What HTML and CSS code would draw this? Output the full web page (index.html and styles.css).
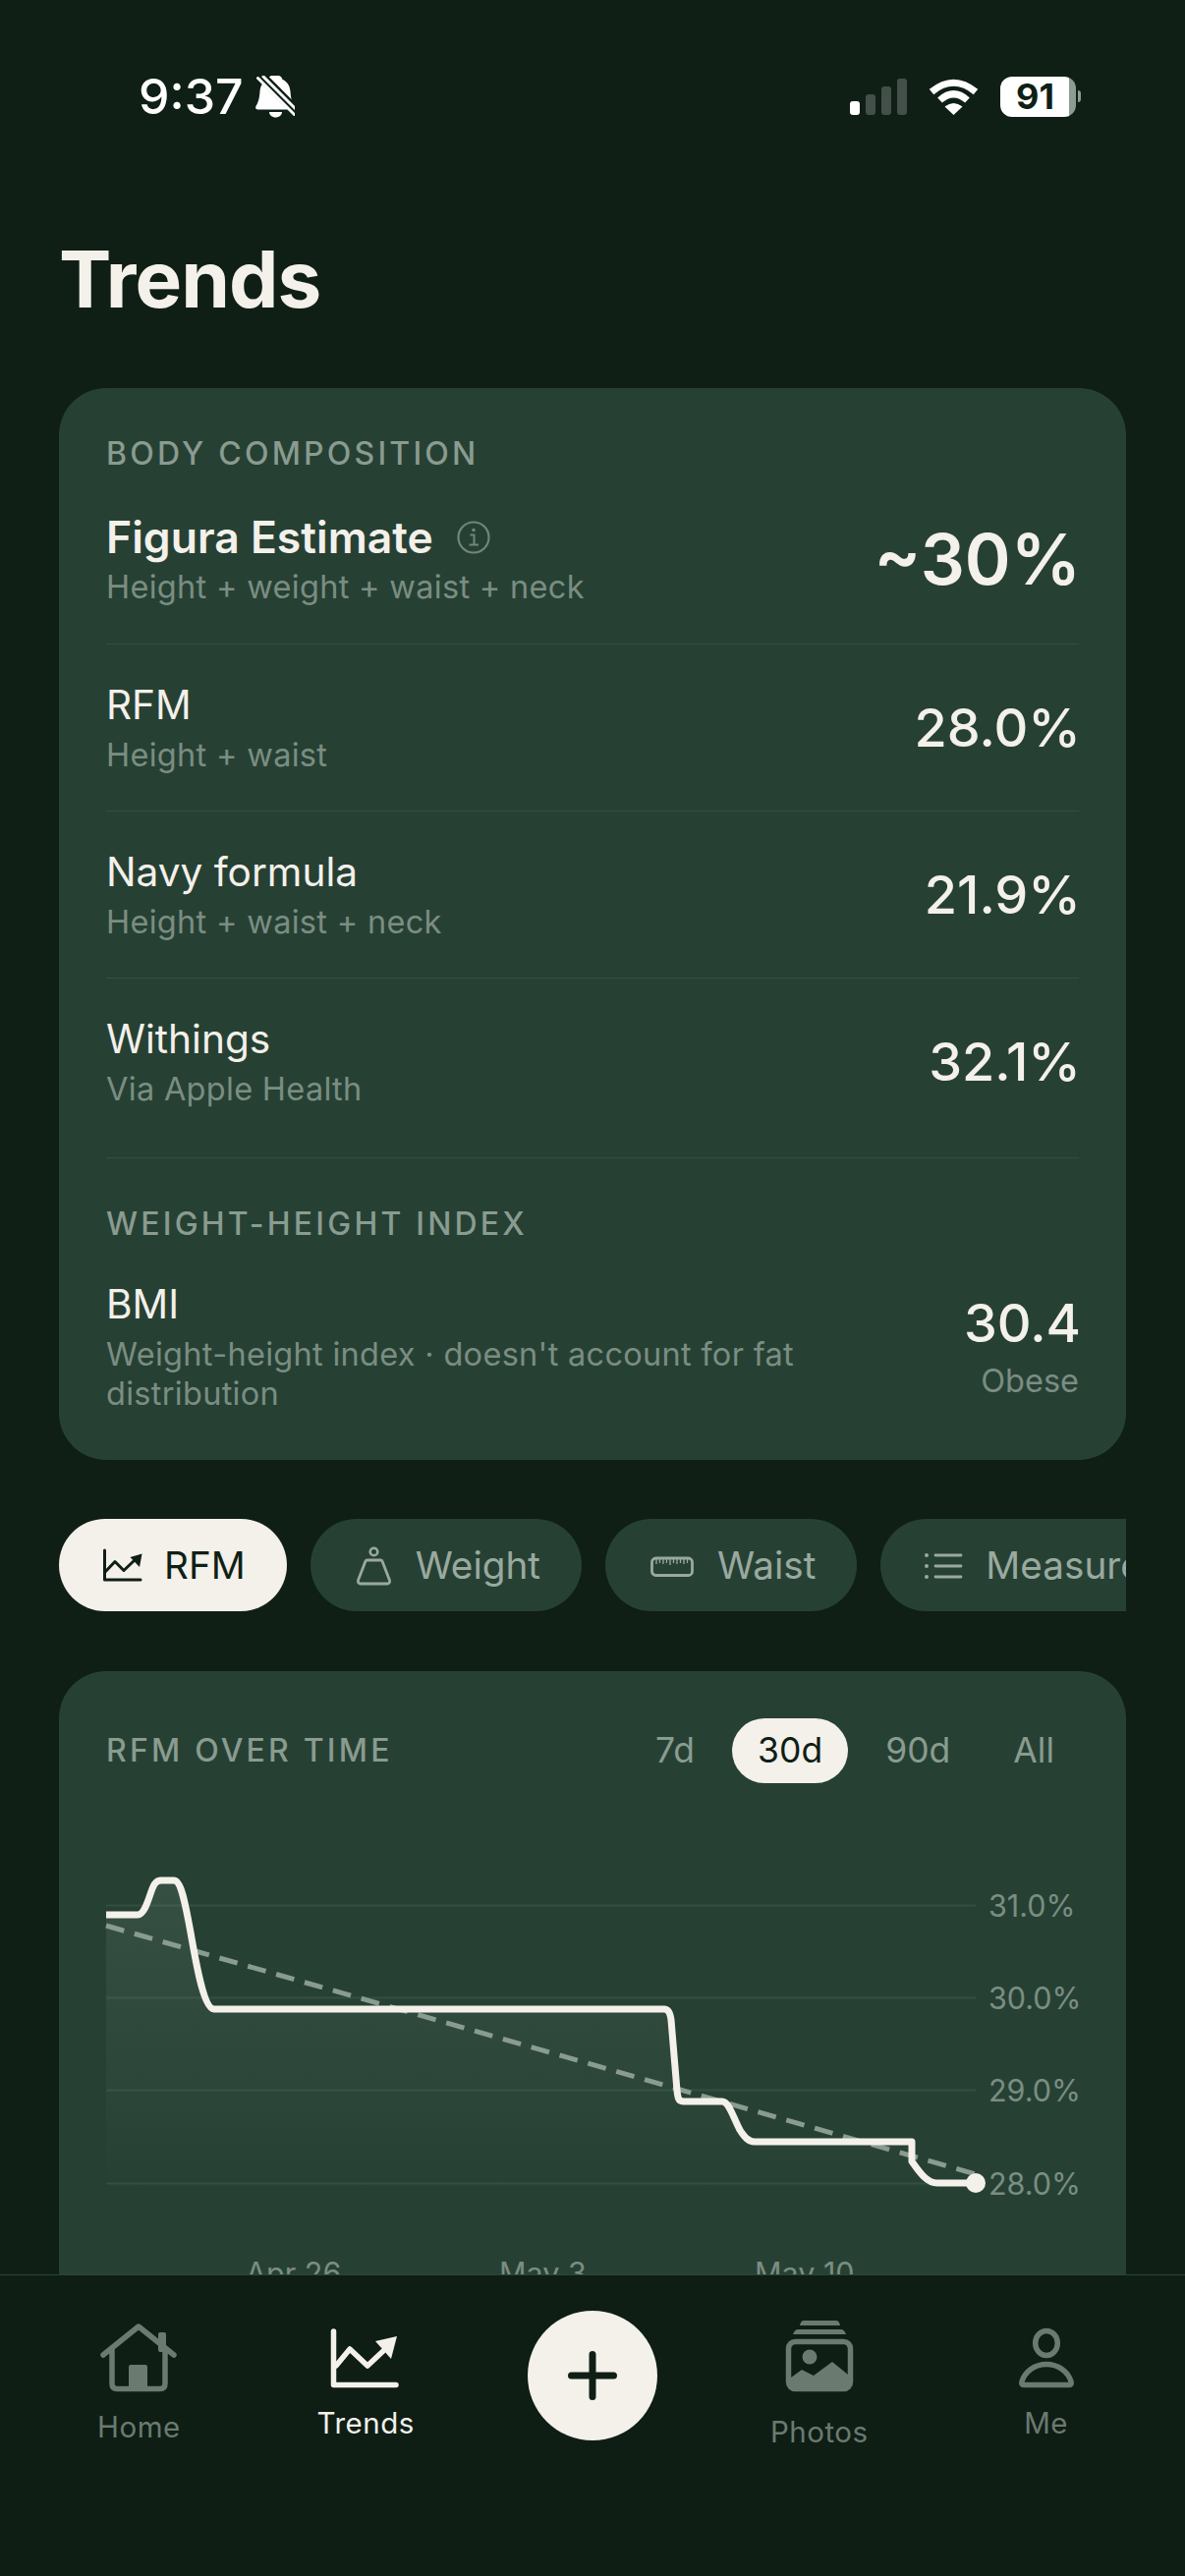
FILE: index.html
```html
<!DOCTYPE html>
<html lang="en">
<head>
<meta charset="utf-8">
<title>Trends</title>
<link rel="stylesheet" href="styles.css">
</head>
<body>
<div class="screen">
  <header class="status">
    <div class="status-left">
      <span class="time">9:37</span>
      <svg class="bell" viewBox="0 0 40 43" width="40" height="43">
        <path fill="#fff" d="M23 0c2.500 0 4 2 4.500 4 5 2 7.500 6.500 8 12 .5 7 1.500 11 4 15 1 2 0 3.500-2 3.500H2.500c-2 0-3-1.500-2-3.500 2.500-4 3.500-8 4-15 .5-5.500 3-10 8-12 .5-2 2-4 4.500-4z"/>
        <path fill="#fff" d="M14 37h13c0 3-3 5.500-6.500 5.500S14 40 14 37z"/>
        <path stroke="#0f1f16" stroke-width="10" d="M5.500 0l36 36"/>
        <path stroke="#fff" stroke-width="3" stroke-linecap="round" d="M2.500 2.500l37 37M8 1l33 33"/>
      </svg>
    </div>
    <div class="status-right">
      <div class="signal">
        <span class="bar bar-1"></span><span class="bar bar-2"></span><span class="bar bar-3"></span><span class="bar bar-4"></span>
      </div>
      <svg class="wifi" viewBox="0 0 51 37" width="51" height="37">
        <path fill="none" stroke="#fff" stroke-width="7" d="M3 13.500Q25.500-5 48 13.500"/>
        <path fill="none" stroke="#fff" stroke-width="7" d="M11.500 22Q25.500 9.500 39.500 22"/>
        <path fill="#fff" d="M25.500 37L16.500 28.500Q25.500 21.500 34.500 28.500Z"/>
      </svg>
      <div class="battery"><div class="battery-body"><span class="battery-num">91</span></div><span class="battery-tip"></span></div>
    </div>
  </header>

  <main class="content">
    <h1 class="title">Trends</h1>

    <section class="card comp-card">
      <div class="label">BODY COMPOSITION</div>
      <div class="row row-first">
        <div class="row-left">
          <div class="name name-strong">Figura Estimate
            <svg class="info" viewBox="0 0 34 34" width="34" height="34">
              <circle cx="17" cy="17" r="15.500" fill="none" stroke="#72857a" stroke-width="2.200"/>
              <circle cx="17" cy="9.500" r="1.800" fill="#72857a"/>
              <path fill="none" stroke="#72857a" stroke-width="2" d="M13.500 14.500H17.500V24M12.500 24.500H22"/>
            </svg>
          </div>
          <div class="sub sub-first">Height + weight + waist + neck</div>
        </div>
        <div class="value value-big">~30%</div>
      </div>
      <div class="row">
        <div class="row-left"><div class="name">RFM</div><div class="sub">Height + waist</div></div>
        <div class="value">28.0%</div>
      </div>
      <div class="row">
        <div class="row-left"><div class="name">Navy formula</div><div class="sub">Height + waist + neck</div></div>
        <div class="value">21.9%</div>
      </div>
      <div class="row row-last">
        <div class="row-left"><div class="name">Withings</div><div class="sub">Via Apple Health</div></div>
        <div class="value">32.1%</div>
      </div>
      <div class="label label-second">WEIGHT-HEIGHT INDEX</div>
      <div class="row row-bmi">
        <div class="row-left row-left-narrow"><div class="name">BMI</div><div class="sub">Weight-height index · doesn't account for fat distribution</div></div>
        <div class="value-stack"><div class="value value-bmi">30.4</div><div class="value-note">Obese</div></div>
      </div>
    </section>

    <div class="chips">
      <div class="chip chip-active">
        <svg class="chip-icon" viewBox="0 0 48 48" width="48" height="48">
          <path fill="none" stroke="#0f1f16" stroke-width="3" stroke-linecap="round" stroke-linejoin="round" d="M4.500 9V39H41"/>
          <path fill="none" stroke="#0f1f16" stroke-width="3" stroke-linejoin="round" d="M5 31L15 20.500 24 29.500 35 19"/>
          <path fill="#0f1f16" d="M30.500 16L42.500 12.500 40 26Z"/>
        </svg>
        <span>RFM</span>
      </div>
      <div class="chip">
        <svg class="chip-icon" viewBox="0 0 48 48" width="48" height="48">
          <circle cx="22.500" cy="10.500" r="3.800" fill="none" stroke="#9aa99f" stroke-width="2.600"/>
          <path fill="none" stroke="#9aa99f" stroke-width="2.800" stroke-linejoin="round" d="M15.500 19H29.500C30.500 19 31 19.500 31.200 20.500L38.500 39.500C39 41.500 38 43 36 43H9C7 43 6 41.500 6.500 39.500L13.800 20.500C14 19.500 14.500 19 15.500 19Z"/>
        </svg>
        <span>Weight</span>
      </div>
      <div class="chip">
        <svg class="chip-icon" viewBox="0 0 55 48" width="55" height="48">
          <rect x="5.500" y="17" width="41" height="17.500" rx="4" fill="none" stroke="#9aa99f" stroke-width="2.800"/>
          <path fill="none" stroke="#9aa99f" stroke-width="1.300" d="M10 18v5M13.500 18v4M17 18v5M20.500 18v4M24 18v6M27.500 18v4M31 18v5M34.500 18v4M38 18v5M41.500 18v4"/>
        </svg>
        <span>Waist</span>
      </div>
      <div class="chip">
        <svg class="chip-icon" viewBox="0 0 48 48" width="48" height="48">
          <path fill="none" stroke="#9aa99f" stroke-width="2.800" stroke-linecap="round" d="M14 14H40M14 25H40M14 36H40"/>
          <circle cx="5" cy="14" r="2" fill="#9aa99f"/><circle cx="5" cy="25" r="2" fill="#9aa99f"/><circle cx="5" cy="36" r="2" fill="#9aa99f"/>
        </svg>
        <span>Measurements</span>
      </div>
    </div>

    <section class="card chart-card">
      <div class="chart-head">
        <div class="label label-chart">RFM OVER TIME</div>
        <div class="ranges">
          <span class="range">7d</span><span class="range range-active">30d</span><span class="range">90d</span><span class="range">All</span>
        </div>
      </div>
      <svg class="chart" viewBox="0 0 990 490" width="990" height="490">
        <defs>
          <linearGradient id="fade" x1="0" y1="40" x2="0" y2="375" gradientUnits="userSpaceOnUse">
            <stop offset="0" stop-color="#fff" stop-opacity="0.08"/>
            <stop offset="1" stop-color="#fff" stop-opacity="0"/>
          </linearGradient>
        </defs>
        <path fill="url(#fade)" d="M0 89H32C38 89 42 77 45 68C48 59 50 54 56 54H71C76 56 80 74 86 107C91 135 99 185 110 185H572L585 279H627C640 279 645 320 660 320H820V340C830 360 835 362 846 362H885V375H0Z"/>
        <g class="grid">
          <path d="M0 79.500H885M0 173.500H885M0 267.500H885M0 362.500H885"/>
        </g>
        <path class="trend" d="M0 100L885 353"/>
        <path class="line" d="M0 89H32C38 89 42 77 45 68C48 59 50 54 56 54H69C76 54 80 74 86 107C91 135 99 185 110 185H568C572 185 574 188 575 196L581 268C582 277 583 279 588 279H627C634 279 638 295 645 308C650 316 654 320 660 320H820V340C827 350 835 362 846 362H885"/>
        <circle class="dot" cx="885" cy="362" r="10"/>
        <text class="axis" x="898" y="91">31.0%</text>
        <text class="axis" x="898" y="185">30.0%</text>
        <text class="axis" x="898" y="279">29.0%</text>
        <text class="axis" x="898" y="374">28.0%</text>
        <text class="axis" x="142" y="465">Apr 26</text>
        <text class="axis" x="400" y="465">May 3</text>
        <text class="axis" x="660" y="465">May 10</text>
      </svg>
    </section>
  </main>

  <nav class="tabbar">
    <div class="tab">
      <svg viewBox="0 -4 80 76" width="80" height="76">
        <path class="ic-stroke" d="M4 33L40 4 76 33M13 26V62Q13 67.500 18 67.500H62Q67 67.500 67 62V26"/>
        <rect class="ic-fill" x="30" y="43" width="19" height="24" rx="2"/>
        <rect class="ic-fill" x="60" y="10" width="8" height="20" rx="2"/>
      </svg>
      <span class="tab-label">Home</span>
    </div>
    <div class="tab tab-active">
      <svg viewBox="0 -6 72 68" width="72" height="68">
        <path class="ic-stroke" d="M3.500 3V57.500H67"/>
        <path class="ic-stroke" d="M6 38L20 21 38 38 54 23"/>
        <path class="ic-fill" d="M46 13L68 8 62 31Z"/>
      </svg>
      <span class="tab-label">Trends</span>
    </div>
    <div class="tab tab-add">
      <div class="add">
        <svg viewBox="0 0 50 50" width="50" height="50">
          <path fill="none" stroke="#0f1f16" stroke-width="7" stroke-linecap="round" d="M3.500 25H46.500M25 3.500V46.500"/>
        </svg>
      </div>
    </div>
    <div class="tab">
      <svg viewBox="0 -5 70 86" width="70" height="86">
        <path class="ic-fill" d="M15 7Q16 2 19 2H52Q55 2 56 7ZM8 16Q10 11 13 11H57Q60 11 62 16Z"/>
        <rect class="ic-stroke" x="3.500" y="23.500" width="63" height="48" rx="7"/>
        <path class="ic-fill" d="M6 60L17 52 29 58 48 44 64 57V68Q64 72 60 72H10Q6 72 6 68Z"/>
        <circle class="ic-fill" cx="25" cy="39" r="7.500"/>
      </svg>
      <span class="tab-label">Photos</span>
    </div>
    <div class="tab">
      <svg viewBox="0 -4 60 68" width="60" height="68">
        <ellipse class="ic-stroke" cx="30" cy="17" rx="11.300" ry="12.500"/>
        <path class="ic-stroke" d="M7 59.500H53Q56 59.500 55 56C52 46 42 38.500 30 38.500C18 38.500 8 46 5 56Q4 59.500 7 59.500Z"/>
      </svg>
      <span class="tab-label">Me</span>
    </div>
  </nav>
</div>
</body>
</html>
```

FILE: styles.css
```css
* { box-sizing: border-box; margin: 0; padding: 0; }
html, body { background: #0f1f16; }
body { font-family: "Inter", "Noto Sans", sans-serif; color: #f4f0ea; }

.screen {
  position: relative;
  width: 1206px;
  height: 2622px;
  overflow: hidden;
  background: #0f1f16;
}

/* status bar */
.status {
  height: 196px;
  padding: 0 106px 0 141px;
  display: flex;
  justify-content: space-between;
  align-items: center;
}
.status-left { display: flex; align-items: center; gap: 12px; }
.time { font-size: 50px; font-weight: 500; line-height: 60px; color: #fff; }
.status-right { display: flex; align-items: center; gap: 22px; }
.signal { display: flex; align-items: flex-end; gap: 6px; height: 37px; }
.bar { width: 10px; border-radius: 3px; background: rgba(255, 255, 255, 0.22); }
.bar-1 { height: 14px; background: #fff; }
.bar-2 { height: 21px; }
.bar-3 { height: 29px; }
.bar-4 { height: 37px; }
.battery { display: flex; align-items: center; gap: 2px; }
.battery-body {
  width: 77px;
  height: 41px;
  border-radius: 12px;
  background: linear-gradient(90deg, #fff 0, #fff 91%, #8d9c92 91%);
  display: flex;
  align-items: center;
  justify-content: center;
}
.battery-num { font-size: 36px; font-weight: 700; line-height: 41px; color: #0f1f16; margin-right: 6px; }
.battery-tip { width: 3px; height: 12px; border-radius: 0 3px 3px 0; background: #8d9c92; }

/* content */
.content { padding: 0 60px; }
.title {
  margin-top: 43px;
  margin-bottom: 66px;
  font-size: 80px;
  font-weight: 700;
  line-height: 90px;
  letter-spacing: -1px;
}
.card { background: #264134; border-radius: 48px; }
.comp-card { height: 1091px; padding: 47px 48px 0; }
.label {
  font-size: 32px;
  font-weight: 500;
  line-height: 40px;
  letter-spacing: 3.2px;
  color: #8a9b90;
}
.label-second { padding-top: 47px; }

.row {
  display: flex;
  justify-content: space-between;
  align-items: center;
  padding: 37px 0 36px;
  border-bottom: 1px solid rgba(255, 255, 255, 0.07);
}
.row-first { padding-bottom: 37px; }
.row-last { padding-bottom: 49px; }
.row-bmi { border-bottom: 0; padding-bottom: 0; }
.row-left-narrow { max-width: 740px; }

.name { font-size: 40.6px; font-weight: 400; line-height: 50px; display: flex; align-items: center; gap: 24px; }
.name-strong { font-size: 44.5px; font-weight: 600; line-height: 56px; }
.info { flex: none; }
.sub { margin-top: 6px; font-size: 32.5px; line-height: 40px; color: #7b8d82; letter-spacing: 0.3px; }
.sub-first { margin-top: 3px; }
.value { font-size: 54px; font-weight: 500; line-height: 62px; text-align: right; margin-right: -2px; }
.value-big { font-size: 71px; font-weight: 600; line-height: 80px; }
.value-stack { display: flex; flex-direction: column; align-items: flex-end; gap: 8px; }
.value-note { font-size: 32.5px; line-height: 40px; color: #7b8d82; }

/* chips */
.chips {
  display: flex;
  gap: 24px;
  margin: 60px 0 61px;
  overflow: hidden;
}
.chip {
  flex: none;
  height: 94px;
  padding: 0 42px;
  border-radius: 47px;
  background: #264134;
  color: #9aa99f;
  display: flex;
  align-items: center;
  gap: 17px;
  font-size: 38.700px;
  line-height: 48px;
}
.chip-active { background: #f4f0ea; color: #0f1f16; }
.chip-icon { flex: none; }

/* chart card */
.chart-card { height: 1000px; padding: 48px 48px 0; }
.chart-head { display: flex; justify-content: space-between; align-items: center; height: 66px; }
.ranges { display: flex; gap: 12px; margin-right: -1px; }
.range {
  height: 66px;
  padding: 0 26px;
  border-radius: 33px;
  font-size: 35.500px;
  line-height: 66px;
  color: #8a9b90;
}
.range-active { background: #f4f0ea; color: #0f1f16; }
.chart { display: block; margin-top: 45px; overflow: visible; }
.grid path { fill: none; stroke: rgba(255, 255, 255, 0.07); stroke-width: 2; }
.trend { fill: none; stroke: #8a9b90; stroke-width: 5; stroke-dasharray: 19 11; }
.line { fill: none; stroke: #f4f0ea; stroke-width: 7; stroke-linejoin: round; }
.dot { fill: #f4f0ea; }
.axis { font-size: 30.500px; fill: #7b8d82; font-family: "Inter", sans-serif; }

/* tab bar */
.tabbar {
  position: absolute;
  left: 0;
  right: 0;
  top: 2315px;
  height: 307px;
  padding: 29px 26px 120px;
  background: #0e1e15;
  border-top: 1px solid #2c4536;
  display: grid;
  grid-template-columns: repeat(5, 1fr);
  align-items: center;
}
.tab {
  display: flex;
  flex-direction: column;
  align-items: center;
  gap: 16px;
  color: #6b7a70;
}
.tab svg { display: block; flex: none; }
.tab-label { font-size: 29.500px; line-height: 36px; letter-spacing: 0.5px; font-weight: 400; }
.tab-active { color: #f4f0ea; }
.ic-stroke { fill: none; stroke: currentColor; stroke-width: 5.500; stroke-linecap: round; stroke-linejoin: round; }
.ic-fill { fill: currentColor; }
.tab-add { margin-bottom: 12px; }
.add {
  width: 132px;
  height: 132px;
  border-radius: 50%;
  background: #f4f0ea;
  display: flex;
  align-items: center;
  justify-content: center;
}
```
